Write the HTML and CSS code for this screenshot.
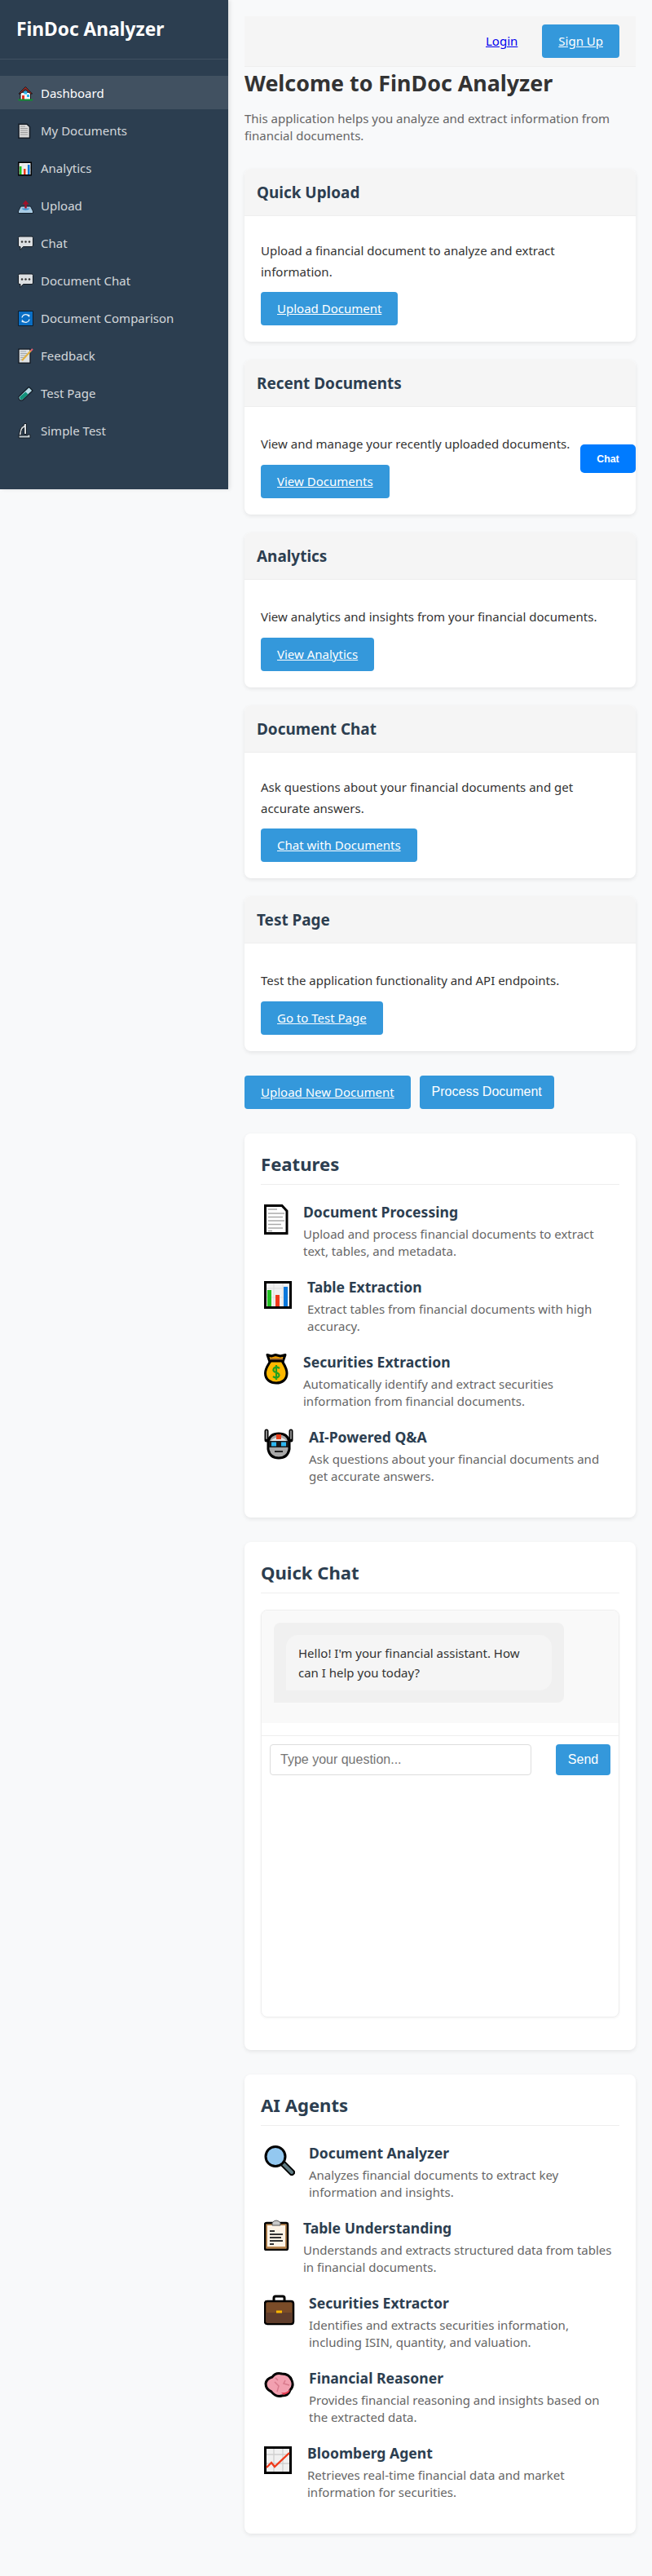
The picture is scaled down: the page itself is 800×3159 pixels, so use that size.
FILE: index.html
```html
<!DOCTYPE html>
<html lang="en">
<head>
<meta charset="utf-8">
<title>FinDoc Analyzer</title>
<link rel="stylesheet" href="styles.css">
</head>
<body>
<svg class="defs" width="0" height="0" aria-hidden="true">
  <symbol id="i-house" viewBox="0 0 38 38">
    <path d="M6 18V35H31V18" fill="#f4f4f4" stroke="#111" stroke-width="2"/>
    <path d="M2 20 18.500 3 35 20 31 20 18.500 8 6 20Z" fill="#d22f27" stroke="#111" stroke-width="2" stroke-linejoin="round"/>
    <path d="M15 14h7v7h-7zM22 22h6v6h-6z" fill="#27b6f0"/>
    <path d="M10 24h6v11h-6z" fill="#e03020"/>
    <path d="M1 35h35" stroke="#109030" stroke-width="4"/>
  </symbol>
  <symbol id="i-doc" viewBox="0 0 38 38">
    <path d="M1.500 2.500H22L28 9V36.500H1.500Z" fill="#fff" stroke="#000" stroke-width="3"/>
    <path d="M5 7h11M5 12h20M5 16.500h18M5 21h20M5 25.500h16M5 30h18M5 33.500h5" stroke="#aaa" stroke-width="1.400"/>
  </symbol>
  <symbol id="i-sdoc" viewBox="0 0 38 38">
    <path d="M2 2.500H22L29 9V36.500H2Z" fill="#d8d8d8" stroke="#151d26" stroke-width="3"/>
    <path d="M6 8h12M6 13h18M6 18h18M6 23h18M6 28h18" stroke="#9a9a9a" stroke-width="2"/>
  </symbol>
  <symbol id="i-chart" viewBox="0 0 38 38">
    <path d="M1.500 4.500H32.500V35.500H1.500Z" fill="#f0f0f0" stroke="#000" stroke-width="3"/>
    <path d="M3 12h28M3 23h28M12 6v28M23 6v28" stroke="#ddd" stroke-width="1"/>
    <path d="M4 14h5v20H4z" fill="#20c020"/>
    <path d="M14 20h5v14h-5z" fill="#f03a1a"/>
    <path d="M24 10h5v24h-5z" fill="#0a78dc"/>
  </symbol>
  <symbol id="i-upload" viewBox="0 0 38 38">
    <path d="M7 20 1 32V37H37V32L31 20Z" fill="#a9cbe4" stroke="#15202c" stroke-width="2"/>
    <path d="M9 25c4 6 16 6 20 0Z" fill="#3a8fd0"/>
    <path d="M19 25V13" stroke="#a01028" stroke-width="5"/>
    <path d="M11 15 19 5 27 15Z" fill="#a01028"/>
  </symbol>
  <symbol id="i-chat" viewBox="0 0 38 38">
    <path d="M4 2H34Q37 2 37 5V24Q37 27 34 27H13L6 35V27H4Q1 27 1 24V5Q1 2 4 2Z" fill="#dcdfe2" stroke="#131a22" stroke-width="2"/>
    <circle cx="10" cy="15" r="2.500" fill="#333"/><circle cx="19" cy="15" r="2.500" fill="#333"/><circle cx="28" cy="15" r="2.500" fill="#333"/>
  </symbol>
  <symbol id="i-sync" viewBox="0 0 38 38">
    <path d="M1 1H37V37H1Z" fill="#0a6ec4" stroke="#0e1a26" stroke-width="2"/>
    <path d="M10 17A9 9 0 0 1 26 13M28 21A9 9 0 0 1 12 25" fill="none" stroke="#e6f2fb" stroke-width="2.600"/>
    <path d="M23 9 29 10 28 17ZM15 29 9 28 10 21Z" fill="#e6f2fb"/>
  </symbol>
  <symbol id="i-memo" viewBox="0 0 38 38">
    <path d="M2 2H30V36H2Z" fill="#dfe2e4" stroke="#10171f" stroke-width="2.500"/>
    <path d="M6 8h14M6 13h16M6 18h14M6 23h10M6 28h8" stroke="#98a0a6" stroke-width="1.800"/>
    <path d="M10 30 32 6" stroke="#e0b040" stroke-width="4"/>
    <path d="M31 7 36 2" stroke="#e06070" stroke-width="4"/>
  </symbol>
  <symbol id="i-tube" viewBox="0 0 38 38">
    <path d="M27 3 36 12 12 35Q6 38 3 33 0 28 4 25Z" fill="#b7dbe6" stroke="#101922" stroke-width="2.200" stroke-linejoin="round"/>
    <path d="M19 15 25 21 12 33Q7 36 5 32 3 29 6 26Z" fill="#12937c"/>
  </symbol>
  <symbol id="i-scope" viewBox="0 0 38 38">
    <path d="M2 30 6 14Q8 8 14 6L15 1H21V27H15V11Q9 13 8 30Z" fill="#d8dcde" stroke="#141c24" stroke-width="2"/>
    <path d="M2 30H24V28H30V36H2Z" fill="#c4ced2" stroke="#141c24" stroke-width="2"/>
  </symbol>
  <symbol id="i-bag" viewBox="0 0 38 38">
    <path d="M4 1.500 9 3 14 1.500 20 3 26 1.500 23 10H7Z" fill="#f0a000" stroke="#000" stroke-width="3" stroke-linejoin="round"/>
    <path d="M7 7H23" stroke="#a06a30" stroke-width="2.500"/>
    <path d="M8 9H22C25 14 28 18 28 24 28 32 22 36 15 36 8 36 1.500 32 1.500 24 1.500 18 5 14 8 9Z" fill="#fdb800" stroke="#000" stroke-width="3"/>
    <path d="M19 18Q15 15 12 18 10 22 15 23 20 25 18 28 15 31 11 28M15 14V32" fill="none" stroke="#20a020" stroke-width="2.200"/>
  </symbol>
  <symbol id="i-robot" viewBox="0 0 38 38">
    <path d="M3 3V14M33 3V14" stroke="#000" stroke-width="5" stroke-linecap="round"/>
    <path d="M3 3V12M33 3V12" stroke="#8a8a8a" stroke-width="2" stroke-linecap="round"/>
    <path d="M5 16Q7 6 18 6 29 6 31 16V25Q29 36 18 36 7 36 5 25Z" fill="#a8a8a8" stroke="#000" stroke-width="3"/>
    <path d="M8 15Q18 6 28 15V19H8Z" fill="#e8e8e8"/>
    <path d="M15 7h6v6h-6z" fill="#e8401c"/>
    <path d="M6 15H30V23H6Z" fill="#1a1a1a"/>
    <path d="M9 16.500h6v5H9zM21 16.500h6v5h-6z" fill="#2cb6f0"/>
    <path d="M13 28h10" stroke="#222" stroke-width="2"/>
  </symbol>
  <symbol id="i-mag" viewBox="0 0 38 38">
    <path d="M22 22 34 34" stroke="#000" stroke-width="8" stroke-linecap="round"/>
    <path d="M23 23 34 34" stroke="#5f7c84" stroke-width="4" stroke-linecap="round"/>
    <circle cx="14" cy="14.500" r="12" fill="#93c8f0" stroke="#000" stroke-width="3"/>
  </symbol>
  <symbol id="i-clip" viewBox="0 0 38 38">
    <path d="M3 4H27Q29 4 29 6V35Q29 37 27 37H3Q1 37 1 35V6Q1 4 3 4Z" fill="#b88650" stroke="#000" stroke-width="2.500"/>
    <path d="M4 7H26V33H4Z" fill="#fdf3e6"/>
    <path d="M10 4Q12 1 15 1 18 1 20 4V7H10Z" fill="#c8c8c8" stroke="#555" stroke-width="1"/>
    <path d="M7 14h6M7 18h16M7 22h14M7 26h16M7 30h5" stroke="#333" stroke-width="1.800"/>
  </symbol>
  <symbol id="i-case" viewBox="0 0 38 38">
    <path d="M12 9V4Q12 2 14 2H23Q25 2 25 4V9" fill="none" stroke="#000" stroke-width="3"/>
    <path d="M4 8H33Q36 8 36 11V33Q36 36 33 36H4Q1 36 1 33V11Q1 8 4 8Z" fill="#7a4c28" stroke="#000" stroke-width="2.500"/>
    <path d="M2.500 22H34.500V33Q34.500 34.500 33 34.500H4Q2.500 34.500 2.500 33Z" fill="#5f3d2c"/>
    <path d="M15 19.500h7v3h-7z" fill="#fcb800"/>
  </symbol>
  <symbol id="i-brain" viewBox="0 0 38 38">
    <path d="M2 17Q3 11 10 9 14 3 22 5 31 5 34 13 37 20 32 25 30 32 22 32 14 34 9 27 2 24 2 17Z" fill="#f2a0b0" stroke="#000" stroke-width="3" stroke-linejoin="round"/>
    <path d="M21 28Q28 29 32 24 32 29 24 31Z" fill="#e33a50"/>
    <path d="M13 15 18 20 16 27M26 13 24 17 31 19M14 10 17 13" fill="none" stroke="#d87a8c" stroke-width="1.500"/>
  </symbol>
  <symbol id="i-up" viewBox="0 0 38 38">
    <path d="M1.500 3.500H32.500V34.500H1.500Z" fill="#f0f0f0" stroke="#000" stroke-width="3"/>
    <path d="M3 12h28M3 23h28M12 5v28M23 5v28" stroke="#cfcfcf" stroke-width="1.300"/>
    <path d="M3 28 9 22 13 27 31 10" fill="none" stroke="#f03a1a" stroke-width="2.400"/>
  </symbol>
</svg>

<div class="layout">
  <aside class="sidebar">
    <div class="brand">FinDoc Analyzer</div>
    <nav class="nav">
      <a class="nav-item active" href="#"><svg class="nav-icon"><use href="#i-house"/></svg>Dashboard</a>
      <a class="nav-item" href="#"><svg class="nav-icon"><use href="#i-sdoc"/></svg>My Documents</a>
      <a class="nav-item" href="#"><svg class="nav-icon"><use href="#i-chart"/></svg>Analytics</a>
      <a class="nav-item" href="#"><svg class="nav-icon"><use href="#i-upload"/></svg>Upload</a>
      <a class="nav-item" href="#"><svg class="nav-icon"><use href="#i-chat"/></svg>Chat</a>
      <a class="nav-item" href="#"><svg class="nav-icon"><use href="#i-chat"/></svg>Document Chat</a>
      <a class="nav-item" href="#"><svg class="nav-icon"><use href="#i-sync"/></svg>Document Comparison</a>
      <a class="nav-item" href="#"><svg class="nav-icon"><use href="#i-memo"/></svg>Feedback</a>
      <a class="nav-item" href="#"><svg class="nav-icon"><use href="#i-tube"/></svg>Test Page</a>
      <a class="nav-item" href="#"><svg class="nav-icon"><use href="#i-scope"/></svg>Simple Test</a>
    </nav>
  </aside>

  <main class="main">
    <header class="topbar">
      <a class="login" href="#">Login</a>
      <a class="btn" href="#">Sign Up</a>
    </header>
    <h1 class="title">Welcome to FinDoc Analyzer</h1>
    <p class="lead">This application helps you analyze and extract information from financial documents.</p>

    <section class="card">
      <h3 class="card-head">Quick Upload</h3>
      <div class="card-body">
        <p>Upload a financial document to analyze and extract information.</p>
        <a class="btn" href="#">Upload Document</a>
      </div>
    </section>
    <section class="card card-short">
      <h3 class="card-head">Recent Documents</h3>
      <div class="card-body">
        <p>View and manage your recently uploaded documents.</p>
        <a class="btn" href="#">View Documents</a>
      </div>
    </section>
    <section class="card card-short">
      <h3 class="card-head">Analytics</h3>
      <div class="card-body">
        <p>View analytics and insights from your financial documents.</p>
        <a class="btn" href="#">View Analytics</a>
      </div>
    </section>
    <section class="card">
      <h3 class="card-head">Document Chat</h3>
      <div class="card-body">
        <p>Ask questions about your financial documents and get accurate answers.</p>
        <a class="btn" href="#">Chat with Documents</a>
      </div>
    </section>
    <section class="card card-short">
      <h3 class="card-head">Test Page</h3>
      <div class="card-body">
        <p>Test the application functionality and API endpoints.</p>
        <a class="btn" href="#">Go to Test Page</a>
      </div>
    </section>

    <div class="actions">
      <a class="btn" href="#">Upload New Document</a>
      <button class="btn-native" type="button">Process Document</button>
    </div>

    <section class="panel">
      <h2 class="panel-title">Features</h2>
      <div class="item">
        <div class="item-icon w32"><svg class="big"><use href="#i-doc"/></svg></div>
        <div class="item-text"><h3>Document Processing</h3><p>Upload and process financial documents to extract text, tables, and metadata.</p></div>
      </div>
      <div class="item">
        <div class="item-icon w37"><svg class="big"><use href="#i-chart"/></svg></div>
        <div class="item-text"><h3>Table Extraction</h3><p>Extract tables from financial documents with high accuracy.</p></div>
      </div>
      <div class="item">
        <div class="item-icon w32"><svg class="big"><use href="#i-bag"/></svg></div>
        <div class="item-text"><h3>Securities Extraction</h3><p>Automatically identify and extract securities information from financial documents.</p></div>
      </div>
      <div class="item">
        <div class="item-icon w39"><svg class="big"><use href="#i-robot"/></svg></div>
        <div class="item-text"><h3>AI-Powered Q&amp;A</h3><p>Ask questions about your financial documents and get accurate answers.</p></div>
      </div>
    </section>

    <section class="panel">
      <h2 class="panel-title">Quick Chat</h2>
      <div class="chat">
        <div class="chat-log">
          <div class="msg"><div class="bubble">Hello! I'm your financial assistant. How can I help you today?</div></div>
        </div>
        <form class="chat-form">
          <input class="chat-input" type="text" placeholder="Type your question...">
          <button class="btn-native send" type="button">Send</button>
        </form>
      </div>
    </section>

    <section class="panel">
      <h2 class="panel-title">AI Agents</h2>
      <div class="item">
        <div class="item-icon w39"><svg class="big"><use href="#i-mag"/></svg></div>
        <div class="item-text"><h3>Document Analyzer</h3><p>Analyzes financial documents to extract key information and insights.</p></div>
      </div>
      <div class="item">
        <div class="item-icon w32"><svg class="big"><use href="#i-clip"/></svg></div>
        <div class="item-text"><h3>Table Understanding</h3><p>Understands and extracts structured data from tables in financial documents.</p></div>
      </div>
      <div class="item">
        <div class="item-icon w39"><svg class="big"><use href="#i-case"/></svg></div>
        <div class="item-text"><h3>Securities Extractor</h3><p>Identifies and extracts securities information, including ISIN, quantity, and valuation.</p></div>
      </div>
      <div class="item">
        <div class="item-icon w39"><svg class="big"><use href="#i-brain"/></svg></div>
        <div class="item-text"><h3>Financial Reasoner</h3><p>Provides financial reasoning and insights based on the extracted data.</p></div>
      </div>
      <div class="item">
        <div class="item-icon w37"><svg class="big"><use href="#i-up"/></svg></div>
        <div class="item-text"><h3>Bloomberg Agent</h3><p>Retrieves real-time financial data and market information for securities.</p></div>
      </div>
    </section>
  </main>
</div>
<button class="chat-fab" type="button">Chat</button>
</body>
</html>
```
FILE: styles.css
```css
* { box-sizing: border-box; }
html, body { margin: 0; padding: 0; }
body {
  position: relative;
  background: #f8f9fa;
  color: #333;
  font-family: "Noto Sans", "Open Sans", sans-serif;
  font-size: 15px;
  line-height: 21px;
  height: 3159px;
}
.defs { position: absolute; }
.layout { display: flex; align-items: flex-start; }

.sidebar {
  flex: 0 0 280px;
  height: 600px;
  background: #2c3e50;
  color: #ecf0f1;
  box-shadow: 2px 0 5px rgba(0,0,0,.1);
}
.brand {
  height: 73px;
  padding: 20px;
  font-size: 22.760px;
  line-height: 32px;
  font-weight: 700;
  color: #fff;
  border-bottom: 1px solid rgba(255,255,255,.1);
}
.nav { padding-top: 20px; display: flex; flex-direction: column; gap: 5px; }
.nav-item {
  display: flex;
  align-items: center;
  height: 41px;
  padding: 1px 20px 0;
  color: rgba(255,255,255,.8);
  text-decoration: none;
}
.nav-item.active { background: rgba(255,255,255,.1); color: #fff; }
.nav-icon { width: 19px; height: 19px; margin: 0 9px 0 2px; flex: none; }

.main { flex: 1; min-width: 0; padding: 20px; }
.topbar {
  display: flex;
  justify-content: flex-end;
  align-items: center;
  gap: 30px;
  padding: 10px 20px;
  background: #f5f5f5;
  border-bottom: 1px solid #eee;
}
.login { color: #0000ee; }
.btn {
  display: inline-block;
  padding: 10px 20px;
  background: #3498db;
  color: #fff;
  border-radius: 4px;
}
.title { margin: 0; padding-top: 1px; font-size: 26.800px; line-height: 38px; font-weight: 700; color: #333; }
.lead { margin: 14px 0 30px; color: #666; }

.card {
  margin-bottom: 22px;
  background: #fff;
  border-radius: 8px;
  box-shadow: 0 2px 5px rgba(0,0,0,.08);
  overflow: hidden;
}
.card-head {
  margin: 0;
  padding: 16px 15px 14px;
  background: #f5f5f5;
  border-bottom: 1px solid #eee;
  font-size: 18.930px;
  line-height: 27px;
  font-weight: 700;
  color: #2c3e50;
}
.card-body { padding: 20px; }
.card-body p { margin: 10px 0 11.800px; line-height: 25.600px; color: #333; }
.card-short .card-body p { margin: 12.700px 0; }

.actions { display: flex; align-items: flex-start; gap: 11px; margin: 30px 0; }
.btn-native {
  padding: 10px 15px;
  height: 41px;
  border: 0;
  border-radius: 4px;
  background: #3498db;
  color: #fff;
  font-family: "Liberation Sans", Arial, sans-serif;
  font-size: 16px;
}

.panel {
  margin-bottom: 30px;
  padding: 20px;
  background: #fff;
  border-radius: 8px;
  box-shadow: 0 2px 5px rgba(0,0,0,.08);
}
.panel-title {
  margin: 0 0 20px;
  padding: 1px 0 9px;
  border-bottom: 1px solid #eee;
  font-size: 22.100px;
  line-height: 32px;
  font-weight: 700;
  color: #2c3e50;
}
.item { display: flex; margin-bottom: 20px; }
.item-icon { flex: none; margin-right: 20px; padding-top: 3px; }
.w32 { width: 32px; }
.w37 { width: 37px; }
.w39 { width: 39px; }
.big { display: block; width: 38px; height: 38px; margin-left: 4px; }
.item-text { flex: 1; min-width: 0; }
.item-text h3 { margin: 0 0 5px; padding-top: 1px; font-size: 17.580px; line-height: 24px; font-weight: 700; color: #2c3e50; }
.item-text p { margin: 0; font-size: 15px; line-height: 21px; color: #666; }

.chat {
  height: 500px;
  margin-bottom: 20px;
  border: 1px solid #eee;
  border-radius: 8px;
  box-shadow: 0 1px 3px rgba(0,0,0,.05);
  overflow: hidden;
}
.chat-log { padding: 15px; background: #f9f9f9; height: 138px; }
.msg { width: 356px; padding: 15px; background: #f0f0f0; border-radius: 8px 8px 8px 0; }
.bubble { padding: 10px 15px; background: #f5f5f5; border-radius: 15px 15px 15px 0; font-size: 15px; line-height: 24px; color: #333; }
.chat-form {
  display: flex;
  justify-content: space-between;
  margin-top: 15px;
  padding: 10px;
  border-top: 1px solid #eee;
}
.chat-input {
  width: 321px;
  height: 38px;
  padding: 8px 12px;
  border: 1px solid #ddd;
  border-radius: 4px;
  font-family: "Liberation Sans", Arial, sans-serif;
  font-size: 16px;
}
.send { width: 67px; height: 38px; padding: 0; }

.chat-fab {
  position: absolute;
  top: 545px;
  right: 20px;
  width: 68px;
  height: 35px;
  border: 0;
  border-radius: 5px;
  background: #007bff;
  color: #fff;
  font-family: "Liberation Sans", Arial, sans-serif;
  font-size: 12.300px;
  font-weight: 700;
}
```
